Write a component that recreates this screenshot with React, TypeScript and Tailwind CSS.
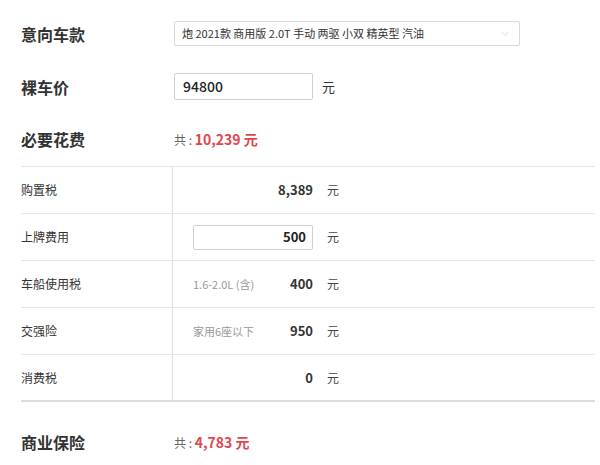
import { ChevronDown } from 'lucide-react'

type Fee = {
  label: string
  value: string
  note?: string
  editable?: boolean
}

const fees: Fee[] = [
  { label: '购置税', value: '8,389' },
  { label: '上牌费用', value: '500', editable: true },
  { label: '车船使用税', value: '400', note: '1.6-2.0L (含)' },
  { label: '交强险', value: '950', note: '家用6座以下' },
  { label: '消费税', value: '0' },
]

function Heading({ children }: { children: React.ReactNode }) {
  return <h2 className="w-[153px] shrink-0 text-[16px] font-bold text-[#333]">{children}</h2>
}

function Total({ amount }: { amount: string }) {
  return (
    <p className="text-[12px] text-[#666]">
      共 : <span className="text-[14px] font-bold text-[#e0474c]">{amount} 元</span>
    </p>
  )
}

export default function App() {
  return (
    <div
      className="w-[600px] h-[465px] bg-white pl-[21px] pr-[5px] pt-[21px] overflow-hidden"
      style={{ fontFamily: '"Noto Sans CJK SC", "Noto Sans", sans-serif' }}
    >
      <div className="flex items-center h-[25px]">
        <Heading>意向车款</Heading>
        <div className="relative flex items-center w-[346px] h-[25px] pl-[7px] border border-[#d9d9d9] rounded-[2px] text-[11px] text-[#333]">
          炮 2021款 商用版 2.0T 手动 两驱 小双 精英型 汽油
          <ChevronDown className="absolute right-[8px] w-[12px] h-[12px] text-[#c8c8c8]" strokeWidth={1.5} />
        </div>
      </div>

      <div className="flex items-center h-[27px] mt-[27px]">
        <Heading>裸车价</Heading>
        <div className="flex items-center w-[139px] h-[27px] pl-[8px] border border-[#d0d0d0] rounded-[2px] text-[14px] font-medium text-[#222]">
          94800
        </div>
        <span className="ml-[9px] text-[13px] text-[#333]">元</span>
      </div>

      <div className="flex items-center h-[26px] mt-[26px]">
        <Heading>必要花费</Heading>
        <Total amount="10,239" />
      </div>

      <div className="mt-[14px] border-t border-[#e6e6e6]">
        {fees.map((f, i) => (
          <div
            key={f.label}
            className={`flex h-[47px] ${
              i === fees.length - 1 ? 'border-b-2 border-[#dedede]' : 'border-b border-[#e6e6e6]'
            }`}
          >
            <div className="w-[152px] shrink-0 flex items-center border-r border-[#e0e0e0] text-[12px] text-[#333]">
              {f.label}
            </div>
            <div className="flex items-center pl-[20px]">
              {f.editable ? (
                <div className="flex items-center justify-end w-[120px] h-[25px] pr-[6px] border border-[#d0d0d0] rounded-[2px] text-[13px] font-bold text-[#222]">
                  {f.value}
                </div>
              ) : (
                <div className="flex items-center justify-between w-[120px]">
                  <span className="text-[11px] text-[#999]">{f.note ?? ''}</span>
                  <span className="text-[13px] font-bold text-[#333]">{f.value}</span>
                </div>
              )}
              <span className="ml-[14px] text-[12px] text-[#444]">元</span>
            </div>
          </div>
        ))}
      </div>

      <div className="flex items-center h-[26px] mt-[27px]">
        <Heading>商业保险</Heading>
        <Total amount="4,783" />
      </div>
    </div>
  )
}
